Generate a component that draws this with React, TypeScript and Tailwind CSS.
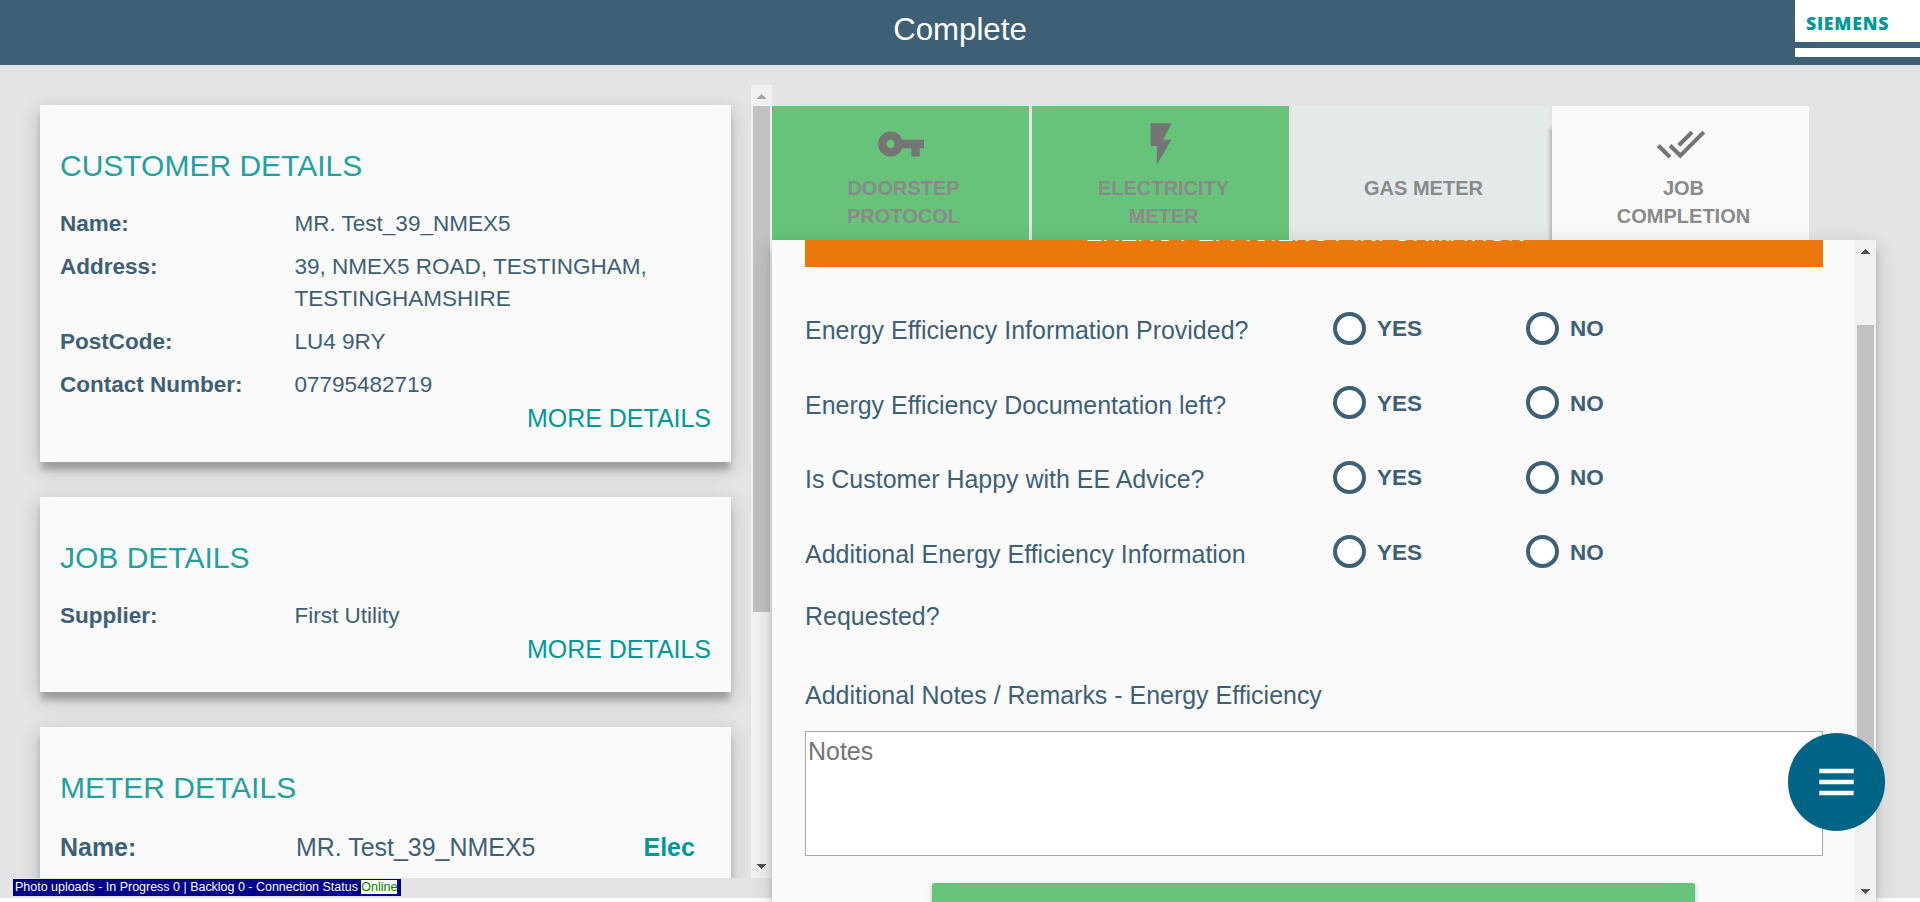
import React from "react";
import { MdVpnKey, MdFlashOn, MdDoneAll } from "react-icons/md";

function Arrow({ down = false, muted = false }: { down?: boolean; muted?: boolean }) {
  return (
    <svg width="9" height="5" viewBox="0 0 9 5" className={muted ? "fill-[#a3a3a3]" : "fill-[#505050]"} shapeRendering="crispEdges">
      <path d={down ? "M0 0h9L4.5 5z" : "M0 5h9L4.5 0z"} />
    </svg>
  );
}

function Card({ title, className, children }: { title: string; className: string; children: React.ReactNode }) {
  return (
    <section className={`shrink-0 bg-[#fafafa] px-5 pt-10 shadow-[0_9px_6px_-1px_rgba(0,0,0,0.22),0_6px_20px_0_rgba(0,0,0,0.18)] ${className}`}>
      <h2 className="text-[30px] leading-[41px] text-[#24a09f]">{title}</h2>
      {children}
    </section>
  );
}

function Field({ label, value }: { label: string; value: string }) {
  return (
    <div className="flex text-[22.5px] leading-8">
      <dt className="w-[234.5px] shrink-0 font-bold">{label}</dt>
      <dd className="w-[370px]">{value}</dd>
    </div>
  );
}

function More() {
  return <div className="text-right text-[24.96px] leading-[34px] text-[#009999]">MORE DETAILS</div>;
}

function Tab({ className, icon, children }: { className: string; icon?: React.ReactNode; children: React.ReactNode }) {
  return (
    <div className={`flex h-[134px] w-[257px] shrink-0 flex-col items-center pt-[13px] ${className}`}>
      <div className="h-[55px] shrink-0 text-[50px] text-[#757575]">{icon}</div>
      <div className="w-[160px] pl-1.5 text-center text-[20px] leading-7 font-bold text-[#8a8a8a]">{children}</div>
    </div>
  );
}

function Choice({ label, className }: { label: string; className: string }) {
  return (
    <label className={`flex items-start gap-[11px] pt-[12.5px] ${className}`}>
      <span className="size-[33px] rounded-full border-4 border-[#3d6077] bg-white" />
      <span className="pt-[1.5px] text-[22.5px] leading-8 font-bold">{label}</span>
    </label>
  );
}

const questions = [
  "Energy Efficiency Information Provided?",
  "Energy Efficiency Documentation left?",
  "Is Customer Happy with EE Advice?",
  "Additional Energy Efficiency Information Requested?",
];

export default function App() {
  return (
    <div className="relative h-[902px] w-[1920px] overflow-hidden bg-white font-['Liberation_Sans',Arial,sans-serif] text-[#3d6077]">
      <div className="flex h-[898px] flex-col bg-[#e4e4e4]">
        <header className="relative flex h-[65px] shrink-0 justify-center bg-[#3d6077] pt-2.5 text-[31.2px] leading-10 text-white">
          Complete
          <div className="absolute top-0 right-0 flex h-[57px] w-[125px] flex-col bg-white">
            <div className="h-[42px] pt-[11px] pl-[11px] font-['Open_Sans',sans-serif] text-[17.7px] leading-6 font-extrabold tracking-[0.75px] text-[#009999]">SIEMENS</div>
            <div className="h-1.5 bg-[#3d6077]" />
          </div>
        </header>

        <div className="flex h-[833px]">
          <aside className="mt-5 flex h-[793px] w-[772px] overflow-hidden">
            <div className="flex h-full w-[751px] flex-col gap-[35px] overflow-hidden pt-5 pl-10">
              <Card title="CUSTOMER DETAILS" className="h-[357px] w-[691px]">
                <dl className="mt-[21.5px] flex flex-col gap-[11.3px]">
                  <Field label="Name:" value="MR. Test_39_NMEX5" />
                  <Field label="Address:" value="39, NMEX5 ROAD, TESTINGHAM, TESTINGHAMSHIRE" />
                  <Field label="PostCode:" value="LU4 9RY" />
                  <Field label="Contact Number:" value="07795482719" />
                </dl>
                <More />
              </Card>
              <Card title="JOB DETAILS" className="h-[195px] w-[691px]">
                <dl className="mt-[21.5px]">
                  <Field label="Supplier:" value="First Utility" />
                </dl>
                <More />
              </Card>
              <Card title="METER DETAILS" className="h-[300px] w-[691px]">
                <div className="mt-[21px] flex text-[24.96px] leading-9">
                  <span className="w-[236px] font-bold">Name:</span>
                  <span className="w-[347.5px]">MR. Test_39_NMEX5</span>
                  <span className="font-bold text-[#009999]">Elec</span>
                </div>
              </Card>
            </div>
            <div className="flex w-[21px] flex-col items-center bg-[#f1f1f1]">
              <div className="flex h-[21px] items-center pt-[2px]">
                <Arrow muted />
              </div>
              <div className="h-[506px] w-[17px] bg-[#c1c1c1]" />
              <div className="mt-auto pb-[9px]">
                <Arrow down />
              </div>
            </div>
          </aside>

          <main className="flex h-[837px] w-[1104px] flex-col pt-[41px]">
            <nav className="flex shrink-0 gap-[3px]">
              <Tab className="bg-[#67c379]" icon={<MdVpnKey />}>DOORSTEP PROTOCOL</Tab>
              <Tab className="bg-[#67c379]" icon={<MdFlashOn />}>ELECTRICITY METER</Tab>
              <Tab className="bg-[#e4eae9]">GAS METER</Tab>
              <Tab className="bg-[#fafafa] shadow-[-6px_18px_4px_-4px_rgba(0,0,0,0.22)]" icon={<MdDoneAll />}>JOB COMPLETION</Tab>
            </nav>
            <div className="relative flex h-[662px] bg-[#fafafa] shadow-[0_9px_6px_-1px_rgba(0,0,0,0.22),0_6px_20px_0_rgba(0,0,0,0.18)]">
              <div className="flex h-full w-[1083px] flex-col overflow-hidden pr-8 pl-[33px]">
                <div className="flex h-[27px] shrink-0 flex-col justify-end overflow-hidden bg-[#eb780b]">
                  <div className="h-[50px] shrink-0 pr-[17px] text-center text-[24.96px] leading-[30px] text-white">ENERGY EFFICIENCY INFORMATION</div>
                </div>
                <div className="mt-8 flex shrink-0 flex-col gap-[12.2px]">
                  {questions.map((q) => (
                    <div key={q} className="flex items-start">
                      <div className="w-[528px] pr-5 text-[24.96px] leading-[62.4px]">{q}</div>
                      <Choice label="YES" className="w-[193px]" />
                      <Choice label="NO" className="w-[193px]" />
                    </div>
                  ))}
                </div>
                <div className="mt-[29px] shrink-0 text-[24.96px] leading-9">Additional Notes / Remarks - Energy Efficiency</div>
                <textarea placeholder="Notes" className="mt-[18px] block h-[125px] w-full shrink-0 resize-none overflow-hidden border border-[#a9a9a9] bg-white px-[2px] py-[5px] text-[24.96px] leading-[29px] placeholder:text-[#757575]" />
                <button className="mt-[27px] ml-[127px] h-[54px] w-[763px] shrink-0 rounded-[2px] bg-[#67c379] shadow-[0_2px_5px_0_rgba(0,0,0,0.26)]" />
              </div>
              <div className="flex w-[21px] flex-col items-center bg-[#f1f1f1]">
                <div className="h-[85px] pt-[9px]">
                  <Arrow />
                </div>
                <div className="h-[455px] w-[17px] bg-[#c1c1c1]" />
                <div className="mt-auto pb-2">
                  <Arrow down />
                </div>
              </div>
            </div>
          </main>
        </div>
      </div>

      <div className="absolute top-[879px] left-[13px] flex h-[17px] w-[388px] items-start bg-[#00008b] pt-px pl-[2px] text-[12.48px] leading-[14px] whitespace-pre text-white">
        Photo uploads - In Progress 0 | Backlog 0 - Connection Status <span className="bg-white text-[#008000]">Online</span>
      </div>

      <button className="absolute top-[733px] left-[1788px] flex h-[98px] w-[97px] items-center justify-center rounded-full bg-[#006487]">
        <svg width="35" height="28" viewBox="0 0 35 28" className="fill-white">
          <path d="M.3.7h34.4v4.6H.3zM.3 11.7h34.4v4.6H.3zM.3 22.7h34.4v4.6H.3z" />
        </svg>
      </button>
    </div>
  );
}
